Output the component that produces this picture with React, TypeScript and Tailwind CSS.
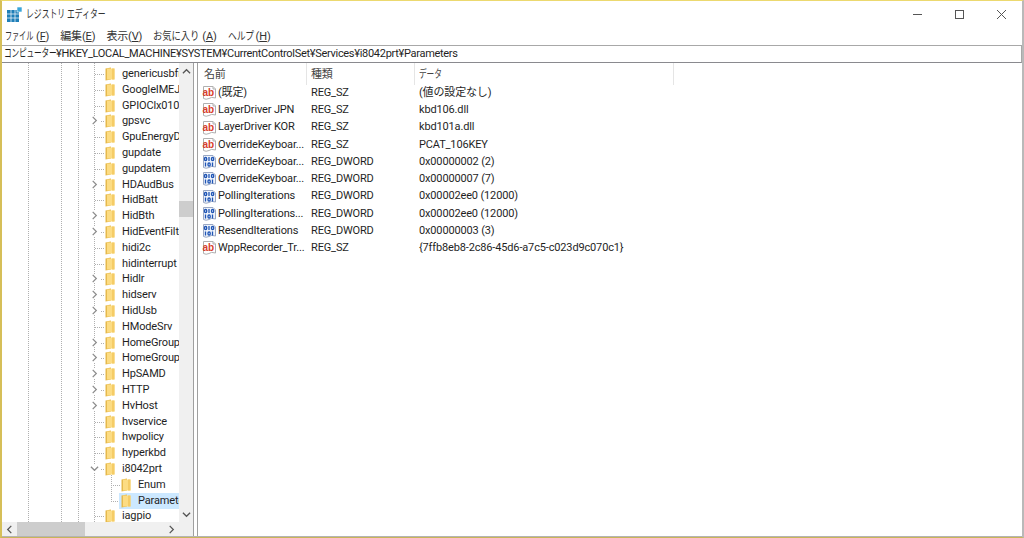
import React from "react";

const font = { fontFamily: 'Roboto, "Noto Sans CJK JP", sans-serif' };

type TreeRow = { name: string; depth?: number; toggle?: "closed" | "open"; selected?: boolean };

const treeRows: TreeRow[] = [
  { name: "genericusbfn" },
  { name: "GoogleIMEJam" },
  { name: "GPIOClx01000" },
  { name: "gpsvc", toggle: "closed" },
  { name: "GpuEnergyDrv" },
  { name: "gupdate" },
  { name: "gupdatem" },
  { name: "HDAudBus", toggle: "closed" },
  { name: "HidBatt" },
  { name: "HidBth", toggle: "closed" },
  { name: "HidEventFilter", toggle: "closed" },
  { name: "hidi2c" },
  { name: "hidinterrupt" },
  { name: "Hidlr", toggle: "closed" },
  { name: "hidserv", toggle: "closed" },
  { name: "HidUsb", toggle: "closed" },
  { name: "HModeSrv" },
  { name: "HomeGroupListener", toggle: "closed" },
  { name: "HomeGroupProvider", toggle: "closed" },
  { name: "HpSAMD", toggle: "closed" },
  { name: "HTTP", toggle: "closed" },
  { name: "HvHost", toggle: "closed" },
  { name: "hvservice" },
  { name: "hwpolicy" },
  { name: "hyperkbd" },
  { name: "i8042prt", toggle: "open" },
  { name: "Enum", depth: 1 },
  { name: "Parameters", depth: 1, selected: true },
  { name: "iagpio" },
];

type Value = { name: string; type: string; data: string };

const values: Value[] = [
  { name: "(既定)", type: "REG_SZ", data: "(値の設定なし)" },
  { name: "LayerDriver JPN", type: "REG_SZ", data: "kbd106.dll" },
  { name: "LayerDriver KOR", type: "REG_SZ", data: "kbd101a.dll" },
  { name: "OverrideKeyboar...", type: "REG_SZ", data: "PCAT_106KEY" },
  { name: "OverrideKeyboar...", type: "REG_DWORD", data: "0x00000002 (2)" },
  { name: "OverrideKeyboar...", type: "REG_DWORD", data: "0x00000007 (7)" },
  { name: "PollingIterations", type: "REG_DWORD", data: "0x00002ee0 (12000)" },
  { name: "PollingIterations...", type: "REG_DWORD", data: "0x00002ee0 (12000)" },
  { name: "ResendIterations", type: "REG_DWORD", data: "0x00000003 (3)" },
  { name: "WppRecorder_Tr...", type: "REG_SZ", data: "{7ffb8eb8-2c86-45d6-a7c5-c023d9c070c1}" },
];

function FolderIcon() {
  return (
    <svg width="10" height="14" viewBox="0 0 10 14" className="shrink-0">
      <path d="M0.5 1.5 L6 0.5 V12.5 L0.5 13.5 Z" fill="#e6b94c" />
      <path d="M2 1.5 H9.5 V12.5 H2 Z" fill="#fcdc83" />
      <path d="M7 1.5 H9.5 V12.5 H7 Z" fill="#f5cc66" />
    </svg>
  );
}

function StringIcon() {
  return (
    <svg width="15" height="16" viewBox="0 0 15 16" className="shrink-0">
      <path d="M1.5 1.5 H11 L13.5 4 V13 Q9 11.5 7 13.5 Q4 15 1.5 13.5 Z" fill="#fff" stroke="#b0b0b0" />
      <path d="M11 1.5 V4 H13.5" fill="#eee" stroke="#b0b0b0" />
      <text x="0.5" y="11" fontSize="10" fontWeight="700" fill="#d8402c" fontFamily="Liberation Sans">ab</text>
    </svg>
  );
}

function BinaryIcon() {
  return (
    <svg width="15" height="16" viewBox="0 0 15 16" className="shrink-0">
      <path d="M1.5 1.5 H11 L13.5 4 V13 Q9 11.5 7 13.5 Q4 15 1.5 13.5 Z" fill="#eef3fb" stroke="#9aa8c4" />
      <g fill="none" stroke="#1f55b5" strokeWidth="1.3">
        <rect x="2.5" y="3.5" width="2.2" height="3" rx="1" />
        <path d="M7 3 V7" />
        <rect x="9.5" y="3.5" width="2.2" height="3" rx="1" />
        <path d="M3.5 8.5 V12.5" />
        <rect x="6" y="9" width="2.2" height="3" rx="1" />
        <path d="M10.5 8.5 V12.5" />
      </g>
    </svg>
  );
}

function Chevron({ dir, color = "#8c8c8c", size = 9 }: { dir: "right" | "down" | "up" | "left"; color?: string; size?: number }) {
  const d = {
    right: "M3 1 L7 5 L3 9",
    left: "M7 1 L3 5 L7 9",
    down: "M1 3 L5 7 L9 3",
    up: "M1 7 L5 3 L9 7",
  }[dir];
  return (
    <svg width={size} height={size} viewBox="0 0 10 10" className="shrink-0">
      <path d={d} fill="none" stroke={color} strokeWidth="1.4" />
    </svg>
  );
}

// kana in the original UI font are much narrower than Noto's
function Kana({ w, children, sx = "scale-x-[0.7]" }: { w: string; children: React.ReactNode; sx?: string }) {
  return (
    <span className={`inline-block ${w} whitespace-nowrap`}>
      <span className={`inline-block origin-left ${sx}`}>{children}</span>
    </span>
  );
}

function TreeItem({ row }: { row: TreeRow }) {
  const depth = row.depth ?? 0;
  return (
    <div className="relative h-[15.8px] whitespace-nowrap">
      {depth === 0 && (
        <>
          {row.toggle ? (
            <span className="absolute left-[88px] top-[3px] flex bg-white">
              <Chevron dir={row.toggle === "open" ? "down" : "right"} />
            </span>
          ) : null}
          <span className={`absolute top-[8px] border-t border-dotted border-[#b0b0b0] ${row.toggle ? "left-[99px] w-[3px]" : "left-[93px] w-[9px]"}`} />
          <span className="absolute left-[103px] top-[1px] flex"><FolderIcon /></span>
          <span className="absolute left-[120px] top-0 leading-[15.8px]">{row.name}</span>
        </>
      )}
      {depth === 1 && (
        <>
          <span className="absolute left-[109px] top-[8px] w-[9px] border-t border-dotted border-[#b0b0b0]" />
          {row.selected && <span className="absolute left-[117px] top-0 h-[16px] w-[60px] bg-[#cce8ff]" />}
          <span className="absolute left-[119px] top-[1px] flex"><FolderIcon /></span>
          <span className="absolute left-[136px] top-0 leading-[15.8px]">{row.name}</span>
        </>
      )}
    </div>
  );
}

export default function App() {
  return (
    <div style={font} className="w-[1024px] h-[538px] overflow-hidden flex flex-col bg-white text-[11px] tracking-[-0.15px] text-[#1f1f1f] border-t border-[#ecd96f] border-l-2 border-l-[#d6bf58] border-r-2 border-r-[#b9b9b9] border-b border-b-[#c9b458]">
      {/* title bar */}
      <div className="h-[26px] flex items-center shrink-0">
        <svg width="15" height="15" viewBox="0 0 15 15" className="ml-[5px] mt-[1px]">
          <rect x="0" y="3" width="12" height="12" fill="#1f7fb8" />
          <path d="M4 3 V15 M8 3 V15 M0 7 H12 M0 11 H12" stroke="#fff" strokeWidth="0.7" />
          <rect x="10" y="0" width="5" height="5" fill="#3aa5d8" stroke="#fff" strokeWidth="0.6" />
        </svg>
        <span className="ml-[4px] pt-[2px] text-[11.5px] tracking-normal text-[#333]">
          <Kana w="w-[80px]" sx="scale-x-[0.68]">レジストリ エディター</Kana>
        </span>
        <div className="ml-auto flex items-center">
          <svg width="9" height="9" viewBox="0 0 9 9" className="mr-[33px]">
            <path d="M0 4.5 H9" stroke="#555" strokeWidth="1" />
          </svg>
          <svg width="9" height="9" viewBox="0 0 9 9" className="mr-[33px]">
            <rect x="0.5" y="0.5" width="8" height="8" fill="none" stroke="#555" />
          </svg>
          <svg width="9" height="9" viewBox="0 0 9 9" className="mr-[16px]">
            <path d="M0 0 L9 9 M9 0 L0 9" stroke="#555" strokeWidth="1" />
          </svg>
        </div>
      </div>

      {/* menu */}
      <div className="h-[18px] flex items-center shrink-0 pl-[3px] pt-[2px] gap-[11px] text-[#333]">
        <span><Kana w="w-[31px]" sx="scale-x-[0.65]">ファイル</Kana>(<u>F</u>)</span>
        <span>編集(<u>E</u>)</span>
        <span>表示(<u>V</u>)</span>
        <span><Kana w="w-[49px]" sx="scale-x-[0.85]">お気に入り</Kana>(<u>A</u>)</span>
        <span><Kana w="w-[28px]" sx="scale-x-[0.8]">ヘルプ</Kana>(<u>H</u>)</span>
      </div>

      {/* address */}
      <div className="h-[18px] shrink-0 flex items-center border-t border-[#a8a8a8] border-b border-b-[#8a8a8f] border-r border-r-[#a8a8a8] pl-[2px] pt-px whitespace-nowrap tracking-[-0.3px]">
        <Kana w="w-[52px]">コンピューター</Kana>
        <span>¥HKEY_LOCAL_MACHINE¥SYSTEM¥CurrentControlSet¥Services¥i8042prt¥Parameters</span>
      </div>

      {/* panes */}
      <div className="flex-1 flex min-h-0 border-b border-[#b4b4b4]">
        {/* tree */}
        <div className="w-[192px] shrink-0 flex flex-col border-r border-[#a0a0a0]">
          <div className="flex-1 flex min-h-0">
            <div className="relative flex-1 min-w-0 overflow-hidden pt-[3px]">
              {/* guides */}
              <span className="absolute left-[26px] top-0 bottom-0 border-l border-dotted border-[#b0b0b0]" />
              <span className="absolute left-[59px] top-0 bottom-0 border-l border-dotted border-[#b0b0b0]" />
              <span className="absolute left-[76px] top-0 bottom-0 border-l border-dotted border-[#b0b0b0]" />
              <span className="absolute left-[92px] top-0 bottom-0 border-l border-dotted border-[#b0b0b0]" />
              <span className="absolute left-[109px] top-[410px] h-[27px] border-l border-dotted border-[#b0b0b0]" />
              <div className="relative">
                {treeRows.map((r) => (
                  <TreeItem key={r.name} row={r} />
                ))}
              </div>
            </div>
            {/* vertical scrollbar */}
            <div className="w-[14px] shrink-0 bg-[#f0f0f0] flex flex-col items-center">
              <div className="h-[16px] flex items-center"><Chevron dir="up" color="#555" /></div>
              <div className="flex-1 relative w-full">
                <div className="absolute left-0 right-0 top-[122px] h-[16px] bg-[#cdcdcd]" />
              </div>
              <div className="h-[16px] flex items-center"><Chevron dir="down" color="#555" /></div>
            </div>
          </div>
          {/* horizontal scrollbar */}
          <div className="h-[14px] shrink-0 bg-[#f0f0f0] flex items-center">
            <div className="w-[15px] flex justify-center"><Chevron dir="left" color="#555" /></div>
            <div className="flex-1 h-full relative">
              <div className="absolute left-0 top-0 bottom-0 w-[68px] bg-[#cdcdcd]" />
            </div>
            <div className="w-[15px] flex justify-center"><Chevron dir="right" color="#555" /></div>
            <div className="w-[14px]" />
          </div>
        </div>

        {/* list */}
        <div className="flex-1 min-w-0 ml-[3px] border-l border-[#a0a0a0] pl-px">
          <div className="h-[21.5px] flex items-center text-[#444]">
            <div className="w-[108px] h-full flex items-center pl-[5px] pt-[3px] border-r border-[#e5e5e5]">名前</div>
            <div className="w-[108px] h-full flex items-center pl-[4px] pt-[3px] border-r border-[#e5e5e5]">種類</div>
            <div className="w-[259px] h-full flex items-center pl-[4px] pt-[3px] border-r border-[#e5e5e5]">
              <Kana w="w-[26px]">データ</Kana>
            </div>
          </div>
          {values.map((v, i) => (
            <div key={i} className="h-[17.25px] flex items-center whitespace-nowrap">
              <div className="w-[108px] flex items-center pl-[3px] gap-px overflow-hidden">
                {v.type === "REG_SZ" ? <StringIcon /> : <BinaryIcon />}
                <span>{v.name}</span>
              </div>
              <div className="w-[108px] pl-[4px]">{v.type}</div>
              <div className="pl-[4px]">{v.data}</div>
            </div>
          ))}
        </div>
      </div>
    </div>
  );
}
